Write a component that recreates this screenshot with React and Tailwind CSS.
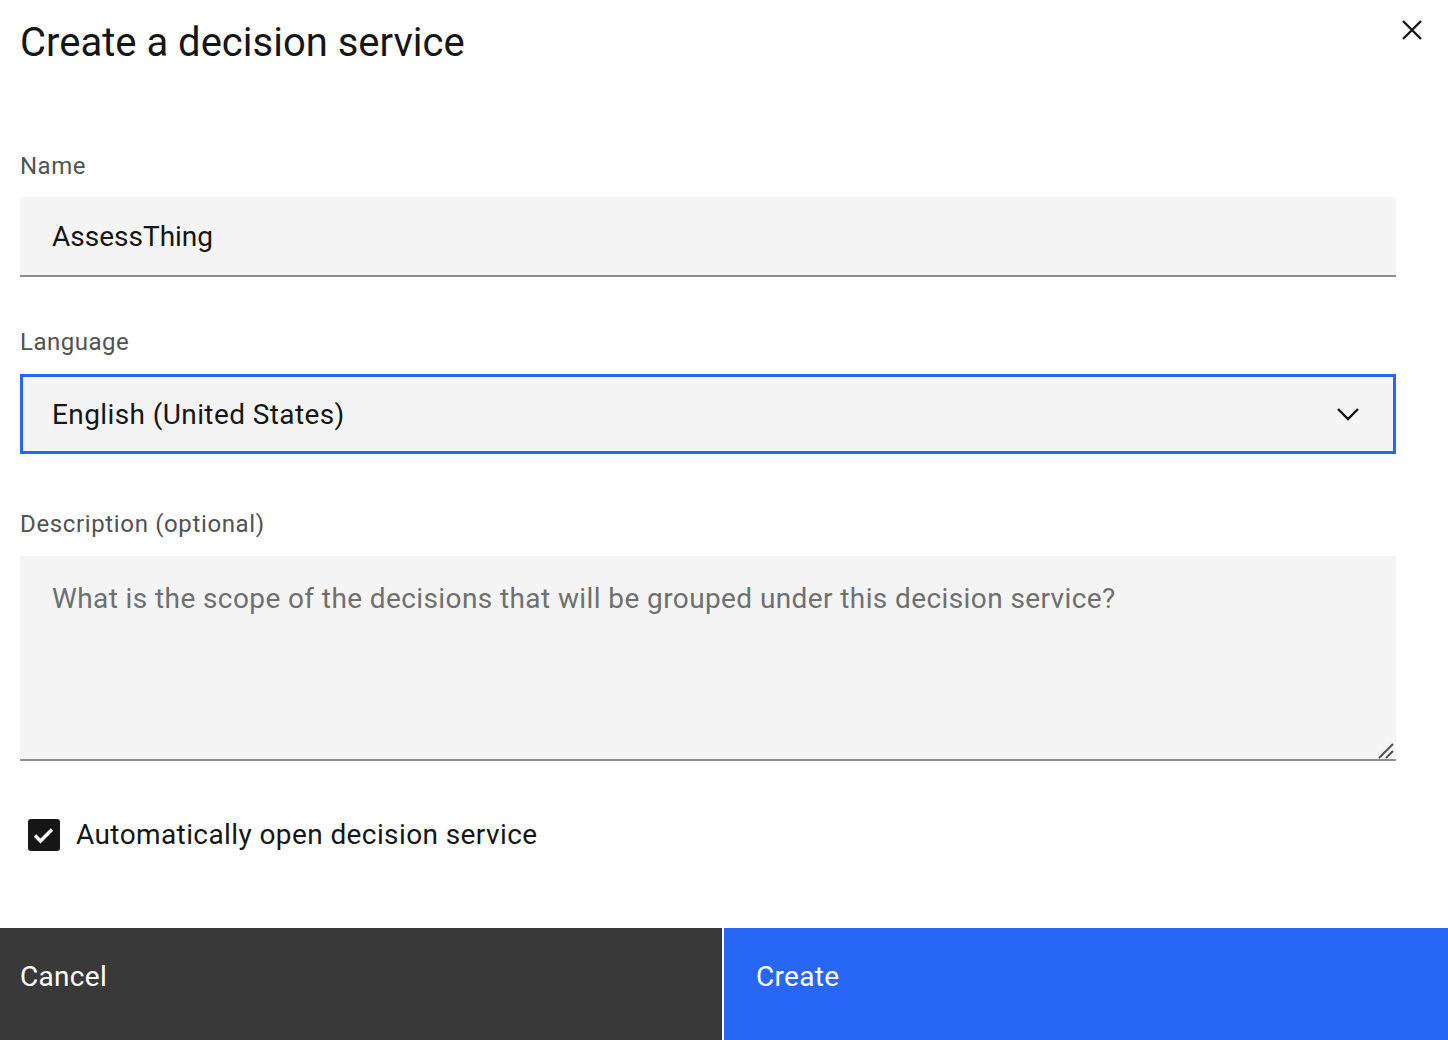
import React from "react";

export default function App() {
  return (
    <div
      className="relative flex h-[1040px] w-[1448px] flex-col overflow-hidden bg-white text-[#161616]"
      style={{ fontFamily: "Roboto, 'Noto Sans', sans-serif" }}
    >
      {/* Header */}
      <div className="pl-[20px] pt-[17px]">
        <h1 className="text-[40px] leading-[52px] font-normal">Create a decision service</h1>
      </div>
      <button className="absolute left-[1400px] top-[18px] flex h-[24px] w-[24px] items-center justify-center">
        <svg width="24" height="24" viewBox="0 0 24 24" fill="none">
          <path d="M3 3 L21 21 M21 3 L3 21" stroke="#161616" strokeWidth="2.4" />
        </svg>
      </button>

      {/* Form */}
      <div className="flex w-[1396px] flex-col pl-[20px]">
        {/* Name */}
        <label className="mt-[81px] mb-[15px] text-[24px] leading-[32px] tracking-[0.5px] text-[#525252]">Name</label>
        <div className="flex h-[80px] items-center border-b-2 border-[#8d8d8d] bg-[#f4f4f4] px-[32px] pt-[2px] text-[28px] tracking-[0px]">
          AssessThing
        </div>

        {/* Language */}
        <label className="mt-[49px] mb-[16px] text-[24px] leading-[32px] tracking-[0.5px] text-[#525252]">Language</label>
        <div className="flex h-[80px] items-center justify-between border-[3px] border-[#2866f6] bg-[#f4f4f4] pl-[29px] pr-[33px] text-[28px] tracking-[0.4px]">
          <span className="pt-[1px]">English (United States)</span>
          <svg width="24" height="14" viewBox="0 0 24 14" fill="none">
            <path d="M2 2 L12 12 L22 2" stroke="#161616" strokeWidth="2.4" />
          </svg>
        </div>

        {/* Description */}
        <label className="mt-[54px] mb-[16px] text-[24px] leading-[32px] tracking-[0.64px] text-[#525252]">Description (optional)</label>
        <div className="relative h-[205px] border-b-2 border-[#8d8d8d] bg-[#f4f4f4] px-[32px] pt-[23px] text-[28px] leading-[40px] tracking-[0.4px] text-[#6f6f6f]">
          What is the scope of the decisions that will be grouped under this decision service?
          <svg className="absolute right-[2px] bottom-[0px]" width="16" height="16" viewBox="0 0 16 16" fill="none">
            <path d="M1 15 L15 1 M8 15 L15 8" stroke="#525252" strokeWidth="2" />
          </svg>
        </div>

        {/* Checkbox */}
        <div className="mt-[54px] flex h-[40px] items-center pl-[8px]">
          <div className="flex h-[32px] w-[32px] items-center justify-center rounded-[3px] bg-[#161616]">
            <svg width="32" height="32" viewBox="0 0 32 32" fill="none">
              <path d="M7 16.5 L12.5 22 L24 10.5" stroke="white" strokeWidth="3.4" />
            </svg>
          </div>
          <span className="ml-[16px] text-[28px] leading-[40px] tracking-[0.4px]">Automatically open decision service</span>
        </div>
      </div>

      {/* Footer */}
      <div className="mt-[73px] flex h-[128px] shrink-0 gap-[2px] bg-white">
        <button className="flex h-full flex-1 items-start bg-[#393939] pl-[20px] pt-[29px] text-left text-[28px] leading-[40px] tracking-[0.3px] text-white">
          Cancel
        </button>
        <button className="flex h-full w-[724px] items-start bg-[#2866f6] pl-[32px] pt-[29px] text-left text-[28px] leading-[40px] tracking-[0.3px] text-white">
          Create
        </button>
      </div>
    </div>
  );
}
